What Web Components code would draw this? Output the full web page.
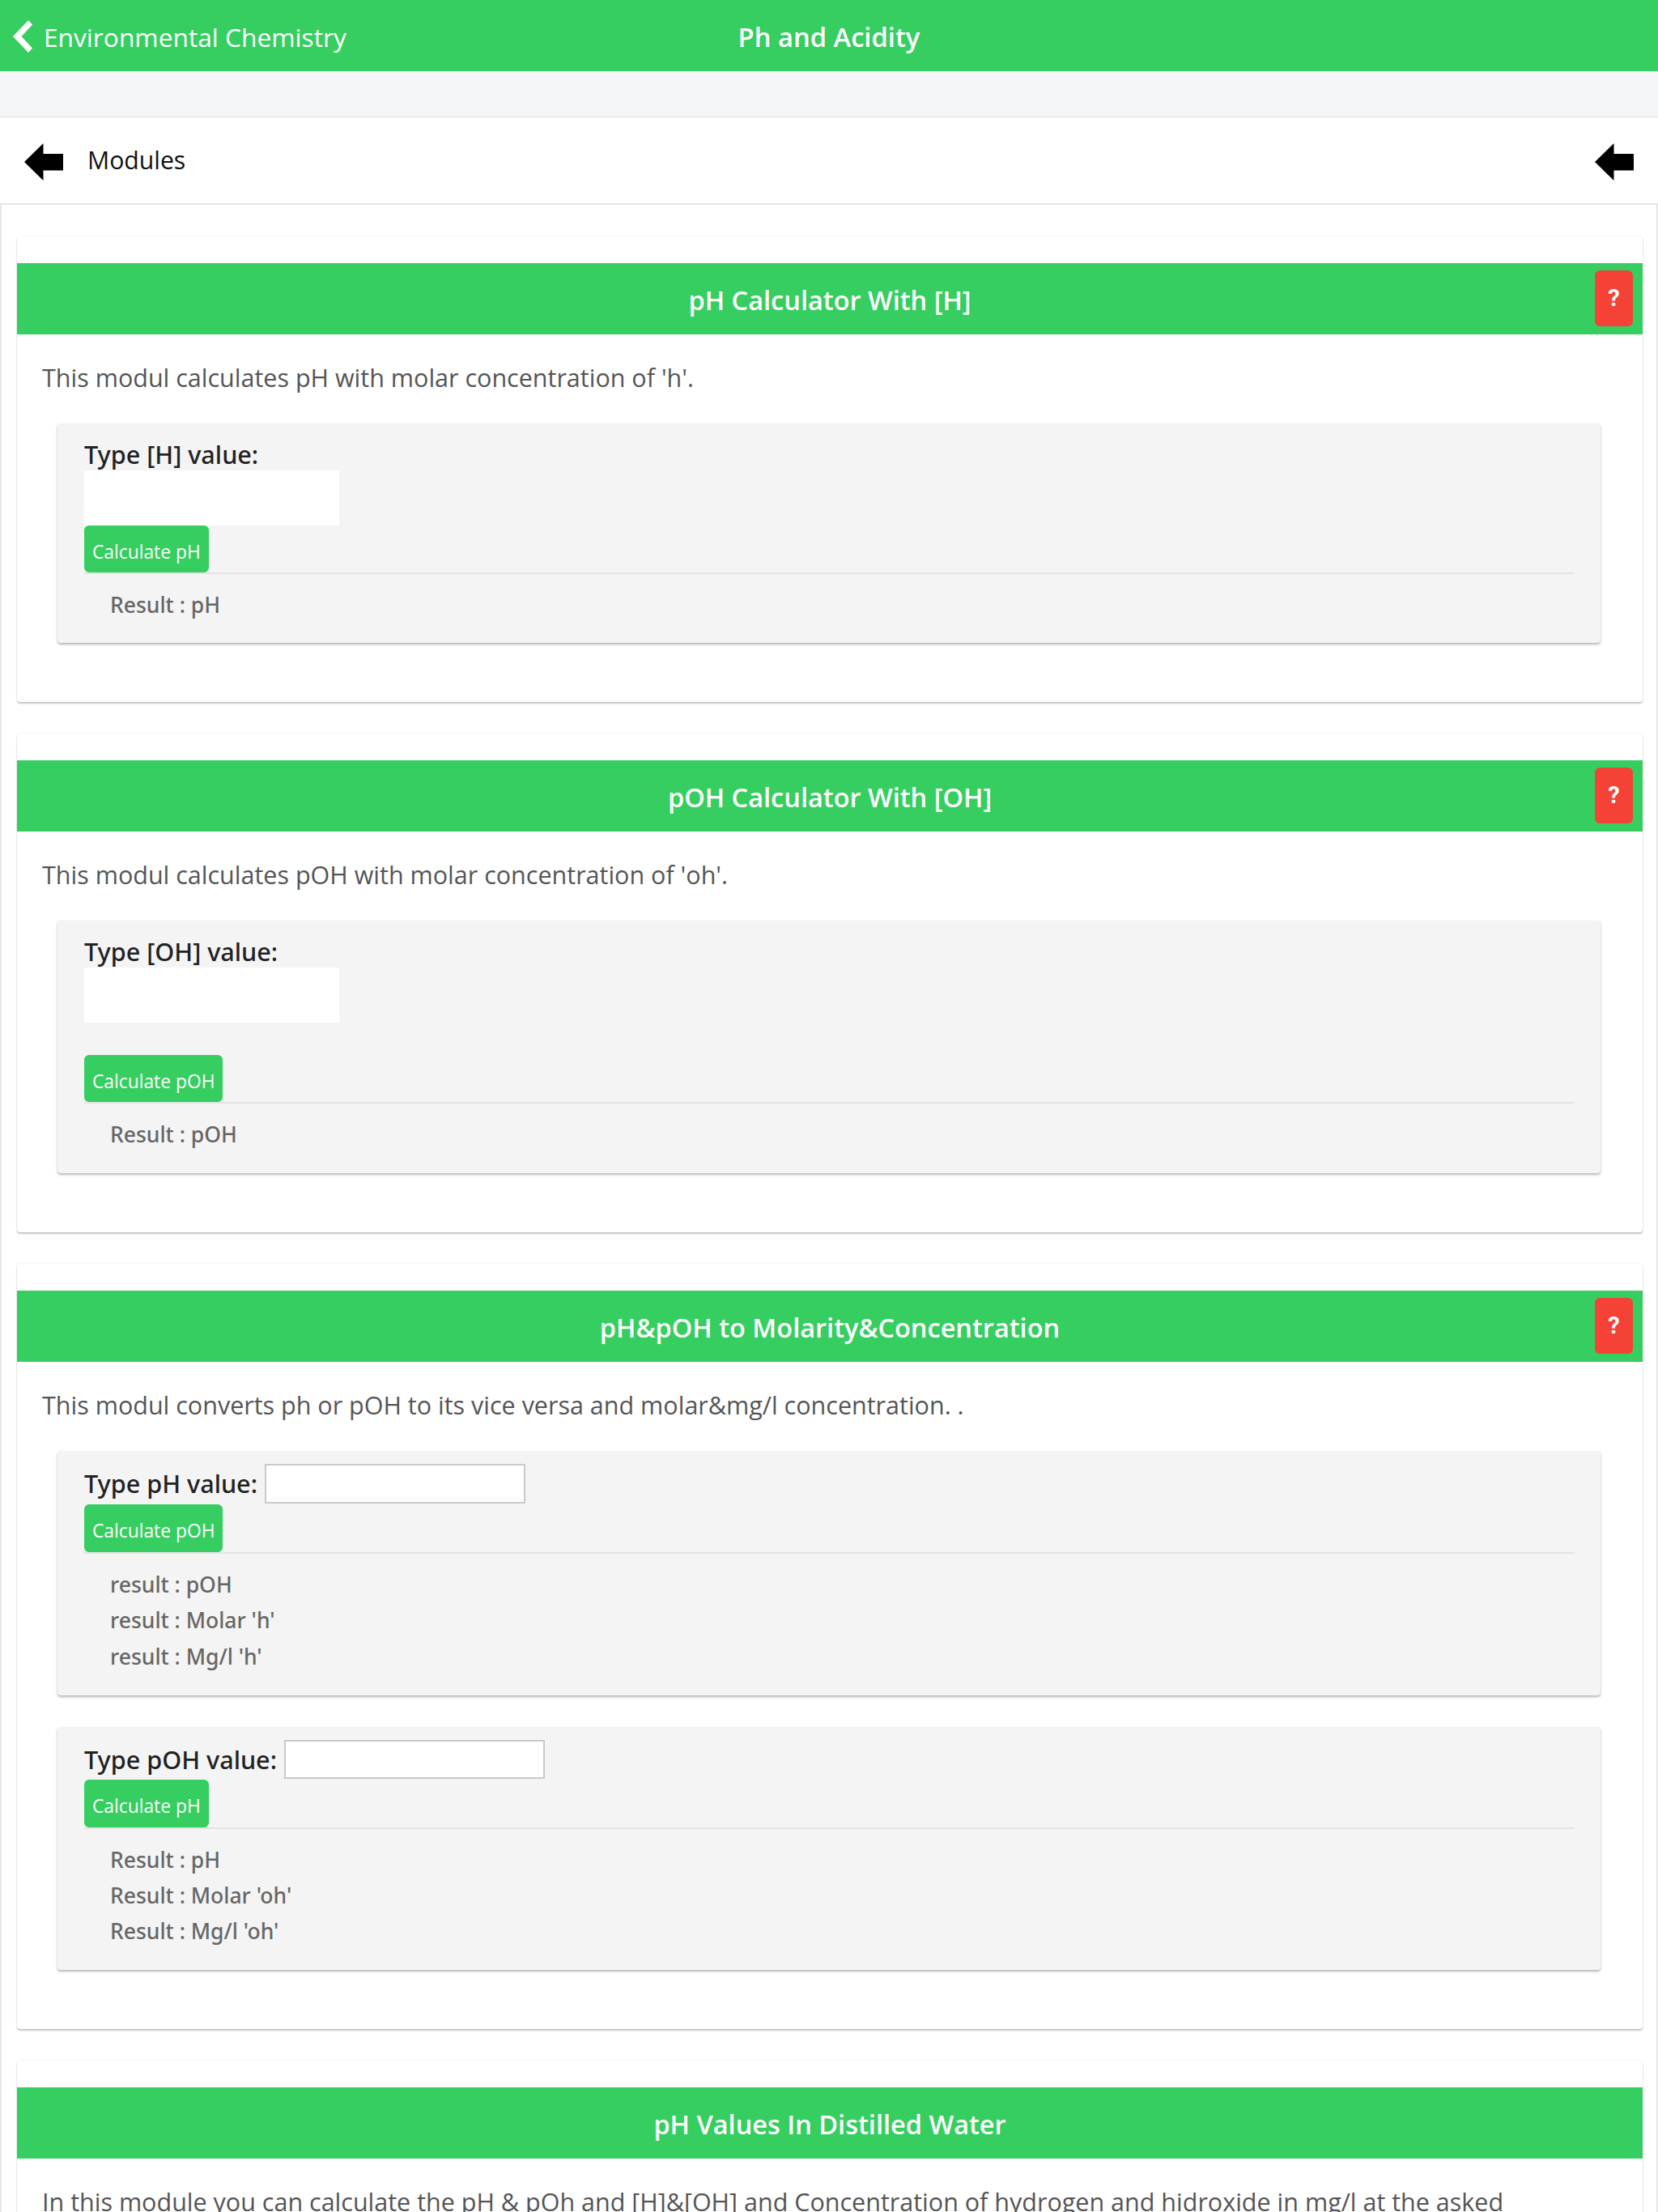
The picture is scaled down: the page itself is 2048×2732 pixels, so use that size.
<!doctype html>
<html lang="en"><head><meta charset="utf-8"><title>Ph and Acidity</title>
<style>
html,body{margin:0;background:#fff;font-family:"Open Sans","Noto Sans",sans-serif}
</style></head><body>
<app-bar back="Environmental Chemistry" title-text="Ph and Acidity"></app-bar>
<sub-bar></sub-bar>
<nav-bar>Modules</nav-bar>
<module-list>
  <module-card heading="pH Calculator With [H]" help text="This modul calculates pH with molar concentration of 'h'.">
    <calc-panel label="Type [H] value:" stacked button="Calculate pH">
      <result-line>Result : pH</result-line>
    </calc-panel>
  </module-card>
  <module-card heading="pOH Calculator With [OH]" help text="This modul calculates pOH with molar concentration of 'oh'.">
    <calc-panel label="Type [OH] value:" stacked spaced button="Calculate pOH">
      <result-line>Result : pOH</result-line>
    </calc-panel>
  </module-card>
  <module-card heading="pH&amp;pOH to Molarity&amp;Concentration" help text="This modul converts ph or pOH to its vice versa and molar&amp;mg/l concentration. .">
    <calc-panel label="Type pH value:" button="Calculate pOH">
      <result-line>result : pOH</result-line>
      <result-line>result : Molar 'h'</result-line>
      <result-line>result : Mg/l 'h'</result-line>
    </calc-panel>
    <calc-panel label="Type pOH value:" compact button="Calculate pH">
      <result-line>Result : pH</result-line>
      <result-line>Result : Molar 'oh'</result-line>
      <result-line>Result : Mg/l 'oh'</result-line>
    </calc-panel>
  </module-card>
  <module-card heading="pH Values In Distilled Water" text="In this module you can calculate the pH &amp; pOh and [H]&amp;[OH] and Concentration of hydrogen and hidroxide in mg/l at the asked"></module-card>
</module-list>
<script>
const GREEN='#36ce60';
const ARROW='<svg width="48" height="46" viewBox="0 0 48 46" aria-hidden="true"><path d="M0 23 23.5 0v13H48v20.5H23.5V46z" fill="#000"/></svg>';
function def(name,render){customElements.define(name,class extends HTMLElement{connectedCallback(){if(this.shadowRoot)return;this.attachShadow({mode:'open'}).innerHTML=render(this);}});}
const esc=s=>(s||'').replace(/&/g,'&amp;').replace(/</g,'&lt;');
def('app-bar',e=>`<style>
:host{display:grid;grid-template-columns:1fr auto 1fr;align-items:center;height:88px;background:${GREEN};color:#fff}
.back{display:flex;align-items:center;padding-left:16px;gap:14px;font-size:31.7px}
.back svg{display:block;margin-top:2px}
.back span{padding-top:2px}
.t{font-size:32.7px;font-weight:600;padding-top:2px}
</style><div class="back"><svg width="24" height="40" viewBox="0 0 24 40" aria-hidden="true"><path d="M19 0 24 5.5 10.5 20 24 34.5 19 40 0 20z" fill="#fff"/></svg><span>${esc(e.getAttribute('back'))}</span></div><div class="t">${esc(e.getAttribute('title-text'))}</div><div></div>`);
def('sub-bar',()=>`<style>:host{display:block;height:56px;background:#f4f5f6;border-bottom:1px solid #ddd}</style>`);
def('nav-bar',()=>`<style>
:host{display:flex;align-items:center;height:102px;padding:4px 30px 0;border-bottom:2px solid #e6e6e6;background:#fff;color:#111;font-size:30.2px}
svg{display:block}
.m{margin:-6px 0 0 30px;flex:1}
</style>${ARROW}<span class="m"><slot></slot></span>${ARROW}`);
def('module-list',()=>`<style>
:host{display:block;padding:39px 17px 0 19px;border-left:2px solid #e6e6e6;border-right:2px solid #e6e6e6}
</style><slot></slot>`);
def('module-card',e=>`<style>
:host{display:block;background:#fff;padding:33px 0 1px;margin-bottom:39px;border-radius:4px;box-shadow:0 2px 2px rgba(0,0,0,.22),0 0 2px rgba(0,0,0,.12)}
header{position:relative;height:88px;background:${GREEN};color:#fff;text-align:center;font-size:32.5px;font-weight:600;line-height:91px}
.help{position:absolute;right:12px;top:9px;width:47px;height:69px;border-radius:6px;background:#f44336;color:#fff;font:700 29px/69px Roboto,sans-serif;text-align:center}
p{margin:32px 31px 36px;font-size:30.5px;line-height:42px;color:#555}
.body{padding:0 52px 0 50px}
::slotted(calc-panel){margin-bottom:39px}
</style><header>${esc(e.getAttribute('heading'))}${e.hasAttribute('help')?'<span class="help">?</span>':''}</header><p>${esc(e.getAttribute('text'))}</p><div class="body"><slot></slot></div><div style="height:33px"></div>`);
def('calc-panel',e=>{const st=e.hasAttribute('stacked'),sp=e.hasAttribute('spaced'),co=e.hasAttribute('compact');return `<style>
:host{display:block;background:#f4f4f4;border-radius:4px;padding:${st?18:16}px 32px ${st?25:25.5}px 33px;box-shadow:0 2px 3px rgba(0,0,0,.28),0 0 2px rgba(0,0,0,.06);color:#222}
.row{display:flex;${st?'flex-direction:column;align-items:flex-start':'align-items:center;gap:9px'};font-family:"Noto Sans",sans-serif;font-size:30.6px;font-weight:500}
.row span{line-height:${st?'40px':co?'48px':'49px'}}
.in{display:block;box-sizing:border-box;background:#fff;${st?'width:315px;height:68px;border:0':`width:322px;height:${co?48:49}px;border:2px solid #c9c9c9`};padding:0;margin:0;outline:0}
button{display:block;width:max-content;box-sizing:border-box;height:${st?58:59}px;padding:6px 10px 0;margin-top:${sp?'40px':st?'0':'1px'};border:0;border-radius:6px;background:${GREEN};color:#fff;font:400 22.8px "Open Sans",sans-serif}
hr{margin:0;border:0;border-top:2px solid #e3e3e3}
.res{padding:16px 0 0 32px}
</style><div class="row"><span>${esc(e.getAttribute('label'))}</span><input class="in" type="text" aria-label="${esc(e.getAttribute('label'))}"></div><button type="button">${esc(e.getAttribute('button'))}</button><hr><div class="res"><slot></slot></div>`});
def('result-line',()=>`<style>:host{display:block;font-family:"Noto Sans",sans-serif;font-size:26.5px;font-weight:500;line-height:44.4px;color:#666}</style><slot></slot>`);
</script>
</body></html>
